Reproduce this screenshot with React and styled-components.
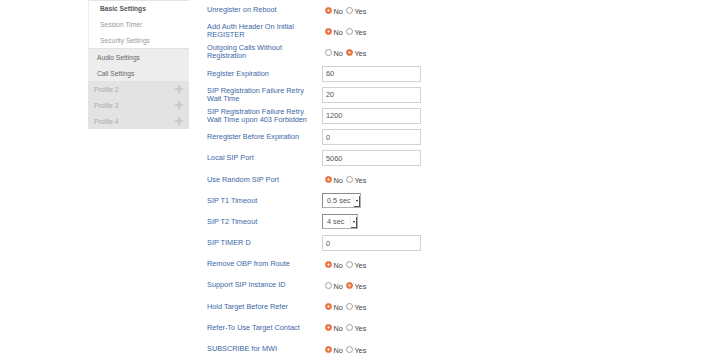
import React from "react";
import styled, { createGlobalStyle } from "styled-components";

const Global = createGlobalStyle`
  html, body { margin: 0; padding: 0; background: #fff; }
  body { font-family: "Liberation Sans", Arial, sans-serif; overflow: hidden; }
`;

const Page = styled.div`
  display: flex;
  align-items: flex-start;
  padding-left: 88px;
  width: 727px;
  height: 360px;
  box-sizing: border-box;
`;

const Sidebar = styled.nav`
  width: 101px;
  flex: none;
  display: flex;
  flex-direction: column;
`;

const SubGroup = styled.div`
  display: flex;
  flex-direction: column;
  box-shadow: inset 1px 0 0 #ececec, inset 0 1px 0 #e4e4e4;
  border-bottom: 1px solid #e2e2e2;
`;

const Group = styled.div`
  display: flex;
  flex-direction: column;
  background: ${(p) => p.$bg};
`;

const NavItem = styled.div`
  height: 16px;
  display: flex;
  align-items: center;
  justify-content: space-between;
  padding-left: ${(p) => p.$indent}px;
  padding-right: 6px;
  font-size: 6.67px;
  font-weight: ${(p) => (p.$active ? "bold" : "normal")};
  color: ${(p) => p.$color};
`;

const Main = styled.main`
  padding-left: 18px;
  margin-top: -0.6px;
  display: flex;
  flex-direction: column;
`;

const Row = styled.div`
  display: grid;
  grid-template-columns: 115px 1fr;
  align-items: center;
  height: 21.19px;
`;

const Label = styled.div`
  width: 108px;
  font-size: 7.33px;
  line-height: 8px;
  color: #3d67a6;
`;

const Control = styled.div`
  display: flex;
  align-items: center;
`;

const RadioGroup = styled.div`
  display: flex;
  align-items: center;
  padding-left: 3px;
  font-size: 7.33px;
  color: #444;
`;

const Radio = styled.input.attrs({ type: "radio", readOnly: true })`
  appearance: none;
  -webkit-appearance: none;
  margin: 0 1.5px 0 0;
  width: 7px;
  height: 7px;
  border-radius: 50%;
  box-sizing: border-box;
  border: 1px solid #a0a0a0;
  background: #fff;
  &:checked {
    border-color: #e36a34;
    background: radial-gradient(circle, #fff 0 0.9px, #ec7a46 1.1px);
  }
`;

const Opt = styled.span`
  margin-right: ${(p) => p.$gap || 0}px;
  position: relative;
  top: 1px;
`;

const TextInput = styled.div`
  width: 99px;
  height: 16px;
  box-sizing: border-box;
  border: 1px solid #d2d2d2;
  display: flex;
  align-items: center;
  padding-left: 3px;
  font-size: 7.33px;
  color: #555;
`;

const Select = styled.div`
  width: ${(p) => p.$w}px;
  height: 15px;
  box-sizing: border-box;
  border: 1px solid #8a8a8a;
  border-right-color: #b0b0b0;
  border-bottom-color: #b0b0b0;
  display: flex;
  align-items: center;
  justify-content: space-between;
  padding-left: 4px;
  font-size: 7.33px;
  color: #555;
`;

const Arrow = styled.span`
  width: 5px;
  height: 11px;
  margin-right: 1px;
  border-left: 1px solid #eaeaea;
  box-shadow: 1px 1px 0 #555;
  display: flex;
  align-items: center;
  justify-content: center;
  &::after {
    content: "";
    border-left: 1.5px solid transparent;
    border-right: 1.5px solid transparent;
    border-top: 2px solid #222;
  }
`;

const MoveIcon = () => (
  <svg width="8" height="8" viewBox="0 0 16 16" fill="none" stroke="#b8b8b8" strokeWidth="1.6">
    <circle cx="8" cy="8" r="2.4" />
    <path d="M8 1v4.6M8 10.4V15M1 8h4.6M10.4 8H15" />
    <path d="M5.8 3.2L8 1l2.2 2.2M5.8 12.8L8 15l2.2-2.2M3.2 5.8L1 8l2.2 2.2M12.8 5.8L15 8l-2.2 2.2" />
  </svg>
);

const rows = [
  { label: "Unregister on Reboot", type: "radio", value: "No" },
  { label: "Add Auth Header On Initial REGISTER", type: "radio", value: "No" },
  { label: "Outgoing Calls Without Registration", type: "radio", value: "Yes" },
  { label: "Register Expiration", type: "text", value: "60" },
  { label: "SIP Registration Failure Retry Wait Time", type: "text", value: "20" },
  { label: "SIP Registration Failure Retry Wait Time upon 403 Forbidden", type: "text", value: "1200" },
  { label: "Reregister Before Expiration", type: "text", value: "0" },
  { label: "Local SIP Port", type: "text", value: "5060" },
  { label: "Use Random SIP Port", type: "radio", value: "No" },
  { label: "SIP T1 Timeout", type: "select", value: "0.5 sec", w: 39 },
  { label: "SIP T2 Timeout", type: "select", value: "4 sec", w: 36 },
  { label: "SIP TIMER D", type: "text", value: "0" },
  { label: "Remove OBP from Route", type: "radio", value: "No" },
  { label: "Support SIP Instance ID", type: "radio", value: "Yes" },
  { label: "Hold Target Before Refer", type: "radio", value: "No" },
  { label: "Refer-To Use Target Contact", type: "radio", value: "No" },
  { label: "SUBSCRIBE for MWI", type: "radio", value: "No" },
];

function Field({ row, idx }) {
  if (row.type === "radio") {
    return (
      <RadioGroup>
        <Radio name={`r${idx}`} checked={row.value === "No"} />
        <Opt $gap={3}>No</Opt>
        <Radio name={`r${idx}`} checked={row.value === "Yes"} />
        <Opt>Yes</Opt>
      </RadioGroup>
    );
  }
  if (row.type === "select") {
    return (
      <Select $w={row.w}>
        {row.value}
        <Arrow />
      </Select>
    );
  }
  return <TextInput>{row.value}</TextInput>;
}

export default function App() {
  return (
    <>
      <Global />
      <Page>
        <Sidebar>
          <SubGroup>
            <NavItem $indent={12} $active $color="#555">Basic Settings</NavItem>
            <NavItem $indent={12} $color="#999">Session Timer</NavItem>
            <NavItem $indent={12} $color="#999">Security Settings</NavItem>
          </SubGroup>
          <Group $bg="#ededed">
            <NavItem $indent={9} $color="#666">Audio Settings</NavItem>
            <NavItem $indent={9} $color="#666">Call Settings</NavItem>
          </Group>
          <Group $bg="#e3e3e3">
            {["Profile 2", "Profile 3", "Profile 4"].map((p) => (
              <NavItem key={p} $indent={6} $color="#aaa">
                {p}
                <MoveIcon />
              </NavItem>
            ))}
          </Group>
        </Sidebar>
        <Main>
          {rows.map((r, i) => (
            <Row key={i}>
              <Label>{r.label}</Label>
              <Control>
                <Field row={r} idx={i} />
              </Control>
            </Row>
          ))}
        </Main>
      </Page>
    </>
  );
}
